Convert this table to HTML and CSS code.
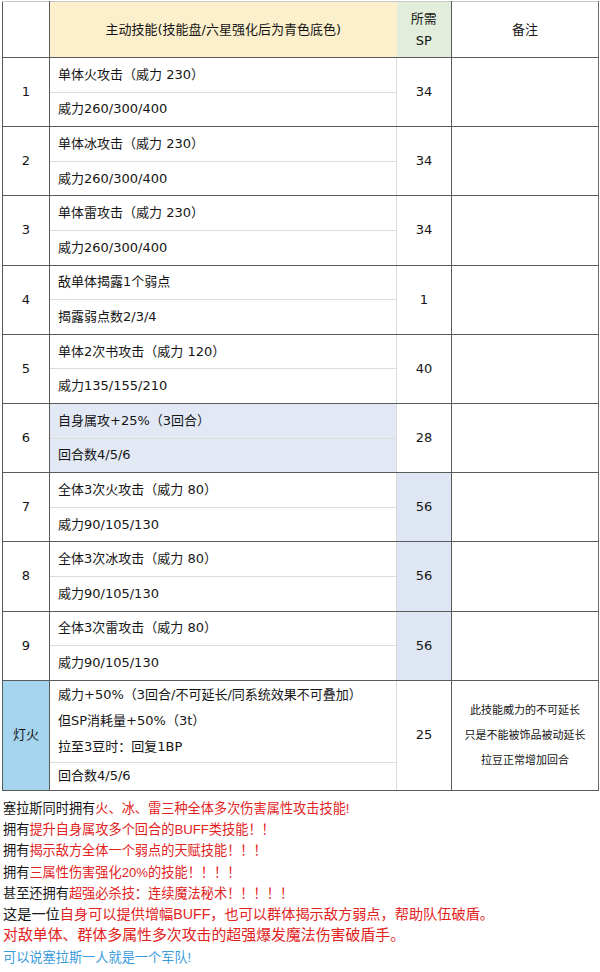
FILE: index.html
```html
<!DOCTYPE html>
<html lang="zh-CN">
<head>
<meta charset="utf-8">
<title>塞拉斯 技能</title>
<link rel="stylesheet" href="styles.css">
</head>
<body>
<table class="skills">
  <colgroup>
    <col class="c-num"><col class="c-desc"><col class="c-sp"><col class="c-note">
  </colgroup>
  <thead>
    <tr class="head">
      <th class="h-num"></th>
      <th class="h-desc">主动技能(技能盘/六星强化后为青色底色)</th>
      <th class="h-sp"><div>所需</div><div>SP</div></th>
      <th class="h-note">备注</th>
    </tr>
  </thead>
  <tbody>
    <tr class="top"><td class="num" rowspan="2">1</td><td class="desc">单体火攻击（威力 230）</td><td class="sp" rowspan="2">34</td><td class="note" rowspan="2"></td></tr>
    <tr class="sub"><td class="desc">威力260/300/400</td></tr>

    <tr class="top"><td class="num" rowspan="2">2</td><td class="desc">单体冰攻击（威力 230）</td><td class="sp" rowspan="2">34</td><td class="note" rowspan="2"></td></tr>
    <tr class="sub"><td class="desc">威力260/300/400</td></tr>

    <tr class="top"><td class="num" rowspan="2">3</td><td class="desc">单体雷攻击（威力 230）</td><td class="sp" rowspan="2">34</td><td class="note" rowspan="2"></td></tr>
    <tr class="sub"><td class="desc">威力260/300/400</td></tr>

    <tr class="top"><td class="num" rowspan="2">4</td><td class="desc">敌单体揭露1个弱点</td><td class="sp" rowspan="2">1</td><td class="note" rowspan="2"></td></tr>
    <tr class="sub"><td class="desc">揭露弱点数2/3/4</td></tr>

    <tr class="top"><td class="num" rowspan="2">5</td><td class="desc">单体2次书攻击（威力 120）</td><td class="sp" rowspan="2">40</td><td class="note" rowspan="2"></td></tr>
    <tr class="sub"><td class="desc">威力135/155/210</td></tr>

    <tr class="top"><td class="num" rowspan="2">6</td><td class="desc upgraded">自身属攻+25%（3回合）</td><td class="sp" rowspan="2">28</td><td class="note" rowspan="2"></td></tr>
    <tr class="sub"><td class="desc upgraded">回合数4/5/6</td></tr>

    <tr class="top"><td class="num" rowspan="2">7</td><td class="desc">全体3次火攻击（威力 80）</td><td class="sp upgraded" rowspan="2">56</td><td class="note" rowspan="2"></td></tr>
    <tr class="sub"><td class="desc">威力90/105/130</td></tr>

    <tr class="top"><td class="num" rowspan="2">8</td><td class="desc">全体3次冰攻击（威力 80）</td><td class="sp upgraded" rowspan="2">56</td><td class="note" rowspan="2"></td></tr>
    <tr class="sub"><td class="desc">威力90/105/130</td></tr>

    <tr class="top"><td class="num" rowspan="2">9</td><td class="desc">全体3次雷攻击（威力 80）</td><td class="sp upgraded" rowspan="2">56</td><td class="note" rowspan="2"></td></tr>
    <tr class="sub"><td class="desc">威力90/105/130</td></tr>

    <tr class="top ult"><td class="num ult-name" rowspan="2">灯火</td><td class="desc multi"><div>威力+50%（3回合/不可延长/同系统效果不可叠加）</div><div>但SP消耗量+50%（3t）</div><div>拉至3豆时：回复1BP</div></td><td class="sp" rowspan="2">25</td><td class="note small" rowspan="2"><div>此技能威力的不可延长</div><div>只是不能被饰品被动延长</div><div>拉豆正常增加回合</div></td></tr>
    <tr class="sub last"><td class="desc">回合数4/5/6</td></tr>
  </tbody>
</table>

<div class="summary">
  <p>塞拉斯同时拥有<span class="red">火、冰、雷三种全体多次伤害属性攻击技能!</span></p>
  <p>拥有<span class="red">提升自身属攻多个回合的BUFF类技能！！</span></p>
  <p>拥有<span class="red">揭示敌方全体一个弱点的天赋技能！！！</span></p>
  <p>拥有<span class="red">三属性伤害强化20%的技能！！！！</span></p>
  <p>甚至还拥有<span class="red">超强必杀技：连续魔法秘术！！！！！</span></p>
  <p class="big">这是一位<span class="red">自身可以提供增幅BUFF，也可以群体揭示敌方弱点，帮助队伍破盾。</span></p>
  <p class="bigger red">对敌单体、群体多属性多次攻击的超强爆发魔法伤害破盾手。</p>
  <p class="blue">可以说塞拉斯一人就是一个军队!</p>
</div>
</body>
</html>
```

FILE: styles.css
```css
html, body {
  margin: 0;
  padding: 0;
  background: #ffffff;
}

body {
  width: 600px;
  font-family: "Liberation Sans", "Noto Sans CJK SC", sans-serif;
  color: #151515;
}

.skills {
  margin: 1px 0 0 2px;
  width: 596px;
  table-layout: fixed;
  border-collapse: collapse;
  font-family: "DejaVu Sans", "Noto Sans CJK SC", sans-serif;
  font-size: 13px;
}

.c-num { width: 47px; }
.c-desc { width: 347px; }
.c-sp { width: 55px; }
.c-note { width: 147px; }

.skills th,
.skills td {
  padding: 0 8px;
  vertical-align: middle;
  line-height: 18px;
}

/* header */
.head { height: 56px; }
.head th {
  font-weight: normal;
  text-align: center;
  border-top: 1px solid #c9c9c9;
  border-bottom: 1px solid #5a5a5a;
}
.h-num {
  border-left: 1px solid #5a5a5a;
  border-right: 1px solid #5a5a5a;
}
.h-desc {
  background: #fcf0cc;
}
.h-sp {
  background: #e2eedb;
  border-right: 1px solid #5a5a5a;
  padding: 0;
}
.h-sp div { line-height: 22px; }
.h-note {
  border-right: 1px solid #6a6a6a;
}

/* body rows */
.top { height: 34.6px; }
.sub { height: 34.6px; }
.top td { border-top: 1px solid #5a5a5a; }
.sub td { border-top: 1px solid #dcdcdc; }

.num {
  text-align: center;
  border-left: 1px solid #5a5a5a;
  border-right: 1px solid #5a5a5a;
  border-bottom: 1px solid #5a5a5a;
}
.desc {
  text-align: left;
}
.sp {
  text-align: center;
  border-left: 1px solid #dadada;
  border-right: 1px solid #5a5a5a;
  border-bottom: 1px solid #5a5a5a;
  padding: 0;
}
.note {
  text-align: center;
  border-right: 1px solid #6a6a6a;
  border-bottom: 1px solid #5a5a5a;
}

.upgraded { background: #e2e9f5; }
.sp.upgraded { background: #dee5f3; }

/* ultimate row */
.ult { height: 82px; }
.ult-name { background: #a5d4ee; padding: 0; }
.multi div { line-height: 26px; }
.last { height: 28px; }
.last td { border-bottom: 1px solid #5a5a5a; }
.note.small {
  font-family: "Liberation Sans", "Noto Sans CJK SC", sans-serif;
  font-size: 11px;
  padding: 0 4px;
}
.note.small div { line-height: 25px; }

/* summary text */
.summary {
  margin-top: 7px;
  padding-left: 3px;
}
.summary p {
  margin: 0;
  font-size: 13.2px;
  line-height: 21.3px;
  white-space: nowrap;
}
.summary p.big {
  font-size: 14.2px;
}
.summary p.bigger {
  font-size: 14.9px;
}
.red { color: #e3231d; }
.blue { color: #3a9bdc; }
```
